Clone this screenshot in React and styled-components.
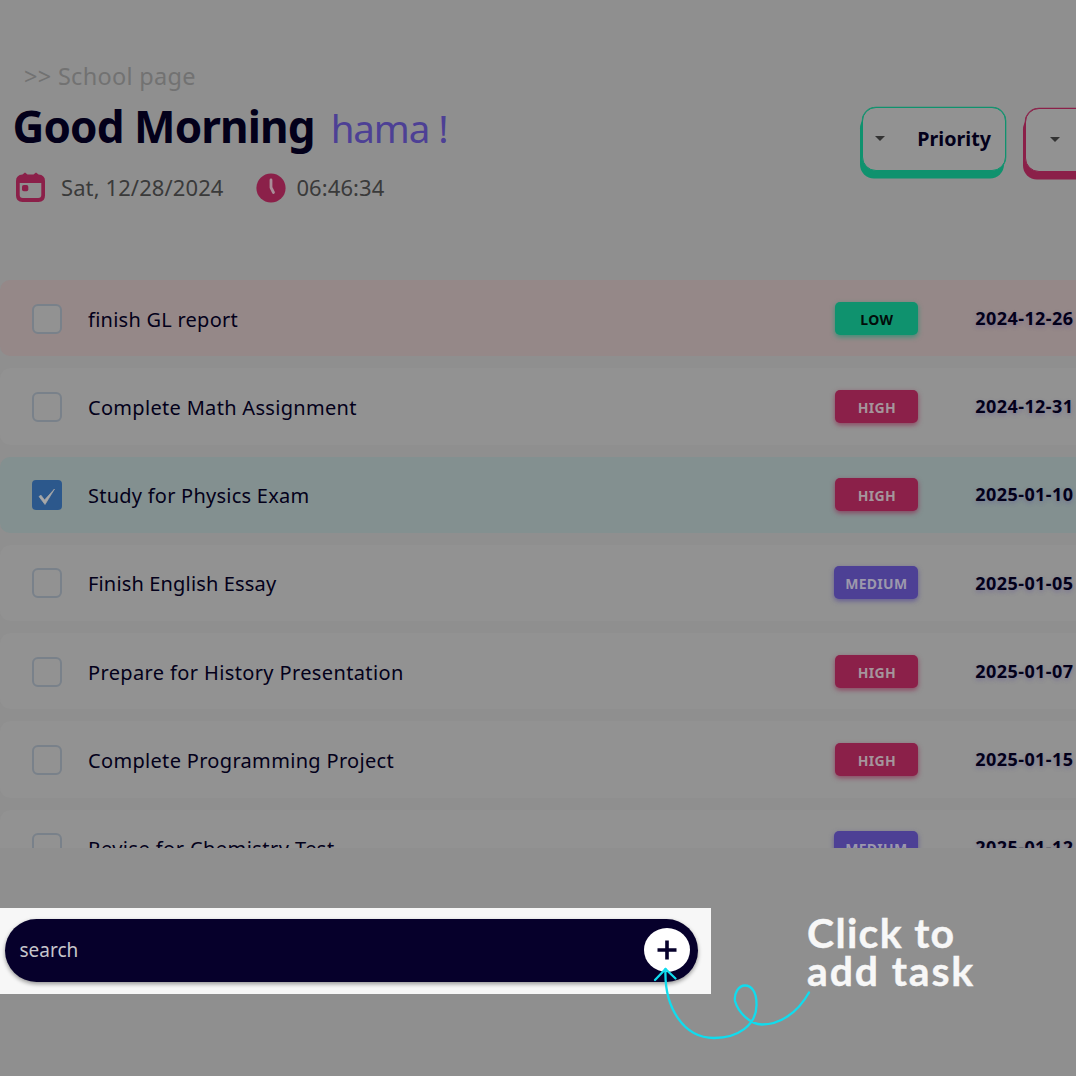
import React from "react";
import styled, { createGlobalStyle } from "styled-components";

const GlobalStyle = createGlobalStyle`
  * { box-sizing: border-box; }
  html, body { margin: 0; padding: 0; overflow: hidden; background: #8f8f8f; }
`;

const Page = styled.main`
  position: relative;
  display: flex;
  flex-direction: column;
  width: 1076px;
  height: 1076px;
  overflow: hidden;
  background: #8f8f8f;
  color: #03001a;
  font-family: "Noto Sans", "Open Sans", sans-serif;
  white-space: nowrap;
`;

const Header = styled.header`
  display: flex;
  justify-content: space-between;
  height: 280px;
  padding-top: 59px;
  flex: none;
`;

const Intro = styled.div`
  display: flex;
  flex-direction: column;
`;

const Breadcrumb = styled.div`
  padding-left: 24px;
  height: 34px;
  line-height: 34px;
  font-size: 23.5px;
  letter-spacing: 0.3px;
  color: #727272;
`;

const Title = styled.h1`
  display: flex;
  align-items: baseline;
  gap: 16px;
  margin: 0;
  padding-left: 12.5px;
  height: 68px;
  line-height: 67px;
  font-size: 44px;
  font-weight: 700;
  letter-spacing: -0.9px;
`;

const UserName = styled.span`
  font-size: 38.5px;
  font-weight: 400;
  letter-spacing: -1.1px;
  color: #4d4095;
`;

const Meta = styled.div`
  display: flex;
  align-items: center;
  height: 53px;
  padding-left: 15px;
  font-size: 22px;
  color: #3a3a3a;
`;

const MetaItem = styled.div`
  display: flex;
  align-items: center;
  gap: ${(p) => p.$gap}px;
  width: ${(p) => p.$w}px;
  letter-spacing: 0.1px;
`;

const MetaValue = styled.span`
  padding-bottom: 1px;
`;

const Filters = styled.div`
  display: flex;
  gap: 19px;
  width: 214px;
  padding-top: 48px;
  flex: none;
`;

const FilterButton = styled.button`
  display: flex;
  align-items: center;
  flex: none;
  width: 144px;
  height: 64px;
  margin-top: ${(p) => p.$drop || 0}px;
  padding: 0 14px 1px ${(p) => p.$inset}px;
  justify-content: space-between;
  border: 1.5px solid ${(p) => p.$color};
  border-radius: 14px;
  background: #929292;
  box-shadow: -2px 7.5px 0 ${(p) => p.$color}, 0 0 0 0.3px ${(p) => p.$color};
  color: #03001a;
  font: 700 19.7px "Noto Sans", sans-serif;
`;

const Caret = styled.span`
  border: 5px solid transparent;
  border-top-color: #333;
  border-bottom: 0;
`;

const List = styled.section`
  display: flex;
  flex-direction: column;
  gap: 12px;
  width: 1180px;
  height: 568px;
  overflow: hidden;
  flex: none;
`;

const rowColors = { late: "#958888", done: "#839090", open: "#929292" };

const Row = styled.article`
  display: flex;
  align-items: center;
  flex: none;
  height: 76.25px;
  padding: 1.2px 0 0 32px;
  border-radius: 10px;
  background: ${(p) => rowColors[p.$state]};
`;

const Check = styled.span`
  display: flex;
  align-items: center;
  justify-content: center;
  flex: none;
  width: 30px;
  height: 30px;
  border: 2px solid ${(p) => (p.$on ? "#2c588c" : "#79818a")};
  border-radius: ${(p) => (p.$on ? 4 : 6)}px;
  background: ${(p) => (p.$on ? "#2c588c" : "#929292")};
`;

const TaskName = styled.span`
  width: 746.3px;
  margin-left: 26px;
  padding-top: 0.8px;
  font-size: 20px;
  letter-spacing: ${(p) => p.$ls}px;
`;

const BadgeSlot = styled.div`
  display: flex;
  justify-content: flex-end;
  width: 84px;
`;

const badgeColors = {
  LOW: ["#0f926e", "#020d0a"],
  HIGH: ["#8b2049", "#a5959c"],
  MEDIUM: ["#4d4095", "#9c98ac"],
};

const Badge = styled.span`
  width: ${(p) => (p.$kind === "MEDIUM" ? 84 : 83)}px;
  height: 33px;
  margin-top: -1px;
  border-radius: 5px;
  line-height: 35px;
  text-align: center;
  font-size: 14px;
  font-weight: 700;
  letter-spacing: 0.3px;
  background: ${(p) => badgeColors[p.$kind][0]};
  color: ${(p) => badgeColors[p.$kind][1]};
  box-shadow: 0 2px 5px ${(p) => badgeColors[p.$kind][0]}aa;
`;

const DueDate = styled.time`
  margin: -1.5px 0 0 57px;
  font-size: 18px;
  font-weight: 700;
  letter-spacing: 0.43px;
  text-shadow: 0 2px 4px rgba(77, 64, 149, 0.35);
`;

const SearchPanel = styled.div`
  display: flex;
  align-items: flex-start;
  width: 711px;
  height: 86px;
  margin-top: 60px;
  padding: 11px 13px 0 5px;
  flex: none;
  background: #f7f7f7;
`;

const SearchBar = styled.div`
  display: flex;
  align-items: center;
  justify-content: space-between;
  width: 693px;
  height: 63px;
  padding: 0 8px 1px 14.5px;
  border-radius: 32px;
  background: #06002b;
  box-shadow: 0 2px 4px rgba(0, 0, 0, 0.4);
  color: #c6c6cb;
  font-size: 19px;
`;

const AddButton = styled.button`
  display: flex;
  align-items: center;
  justify-content: center;
  width: 46px;
  height: 44px;
  padding: 0;
  border: 0;
  border-radius: 50%;
  background: #fff;
`;

const Hint = styled.p`
  position: absolute;
  left: 807px;
  top: 914px;
  margin: 0;
  font: 700 41px/38px Lato, sans-serif;
  color: #f7f7f7;
  -webkit-text-stroke: 0.4px #f7f7f7;
`;

const HintLine = styled.span`
  display: block;
  letter-spacing: ${(p) => p.$ls}px;
`;

const HintArrow = styled.svg`
  position: absolute;
  left: 640px;
  top: 960px;
`;

const tasks = [
  ["finish GL report", "LOW", "2024-12-26", "late", 0.25],
  ["Complete Math Assignment", "HIGH", "2024-12-31", "open", 0.31],
  ["Study for Physics Exam", "HIGH", "2025-01-10", "done", 0.24],
  ["Finish English Essay", "MEDIUM", "2025-01-05", "open", 0.16],
  ["Prepare for History Presentation", "HIGH", "2025-01-07", "open", 0.37],
  ["Complete Programming Project", "HIGH", "2025-01-15", "open", 0.32],
  ["Revise for Chemistry Test", "MEDIUM", "2025-01-12", "open", 0.44],
];

const CalendarIcon = () => (
  <svg width="31" height="31" viewBox="0 0 31 31">
    <path
      fill="#8b2049"
      fillRule="evenodd"
      d="M7.500 2.500 L10 .5 L12.500 2.500 H18.500 L21 .5 L23.500 2.500 Q30 3 30 9 V23.500 Q30 30 23.500 30 H7.500 Q1 30 1 23.500 V9 Q1 3 7.500 2.500Z M4.700 11 V23 Q4.700 26 7.700 26 H23.300 Q26.300 26 26.300 23 V11Z"
    />
    <rect x="7" y="13" width="6.3" height="6.3" rx="1.8" fill="#8b2049" />
  </svg>
);

const ClockIcon = () => (
  <svg width="30" height="30" viewBox="0 0 30 30">
    <circle cx="15" cy="15" r="14.6" fill="#8b2049" />
    <path d="M15 7V14.500l2.500 5" fill="none" stroke="#a98d98" strokeWidth="2.8" strokeLinecap="round" strokeLinejoin="round" />
  </svg>
);

export default function App() {
  return (
    <Page>
      <GlobalStyle />
      <Header>
        <Intro>
          <Breadcrumb>&gt;&gt; School page</Breadcrumb>
          <Title>
            Good Morning <UserName>hama !</UserName>
          </Title>
          <Meta>
            <MetaItem $gap={15} $w={241.4}>
              <CalendarIcon />
              <MetaValue>Sat, 12/28/2024</MetaValue>
            </MetaItem>
            <MetaItem $gap={10} $w={140}>
              <ClockIcon />
              <MetaValue>06:46:34</MetaValue>
            </MetaItem>
          </Meta>
        </Intro>
        <Filters>
          <FilterButton $color="#0f926e" $inset={12}><Caret />Priority</FilterButton>
          <FilterButton $color="#8b2049" $drop={1} $inset={24}><Caret /></FilterButton>
        </Filters>
      </Header>
      <List>
        {tasks.map(([name, kind, due, state, spacing]) => (
          <Row key={name} $state={state}>
            <Check $on={state === "done"}>
              {state === "done" && (
                <svg width="26" height="26" viewBox="0 0 26 26">
                  <path d="M5 14.500 L7 13.200 L10.500 18 L20.500 7 L11 22.500Z" fill="#a8a8a8" stroke="#a8a8a8" strokeWidth="0.7" />
                </svg>
              )}
            </Check>
            <TaskName $ls={spacing}>{name}</TaskName>
            <BadgeSlot><Badge $kind={kind}>{kind}</Badge></BadgeSlot>
            <DueDate>{due}</DueDate>
          </Row>
        ))}
      </List>
      <SearchPanel>
        <SearchBar>
          search
          <AddButton aria-label="Add task">
            <svg width="20" height="20" viewBox="0 0 20 20">
              <path d="M10 .5v19M.5 10h19" stroke="#06002b" strokeWidth="3.6" />
            </svg>
          </AddButton>
        </SearchBar>
      </SearchPanel>
      <Hint>
        <HintLine $ls={1.3}>Click to</HintLine>
        <HintLine $ls={1.85}>add task</HintLine>
      </Hint>
      <HintArrow width="180" height="90" viewBox="640 960 180 90" fill="none" stroke="#10dcee" strokeWidth="2.3" strokeLinecap="round">
        <path d="M655 980 L665.500 969 L675.500 978.500" strokeLinejoin="round" />
        <path d="M665.500 969 C664 1008 684 1038 714 1038 C738 1038 757 1025 756.500 1004 C756.500 991 751 985.500 745 985.500 C738 985.500 734 994 735 1001 C738 1012 750 1024.500 762 1024.500 C779 1024.500 797 1014 809 992.500" />
      </HintArrow>
    </Page>
  );
}
